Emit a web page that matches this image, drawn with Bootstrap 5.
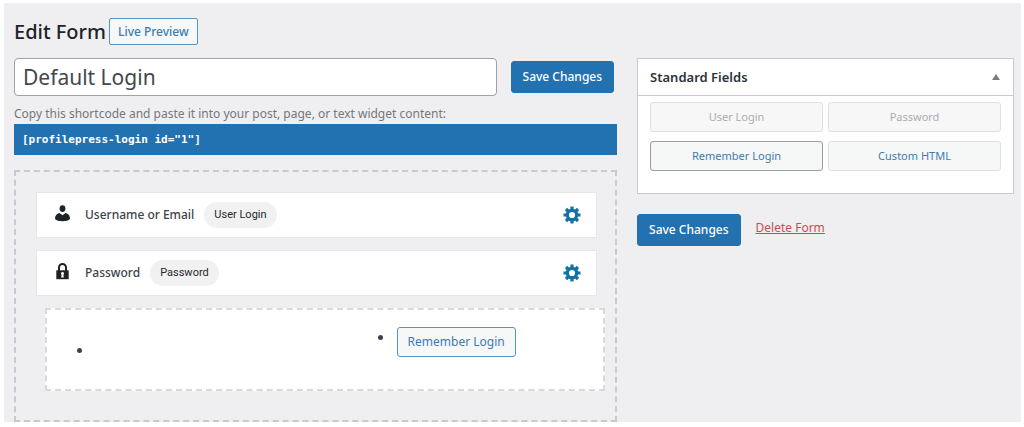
<!DOCTYPE html>
<html lang="en">
<head>
<meta charset="utf-8">
<meta name="viewport" content="width=device-width, initial-scale=1">
<title>Edit Form</title>
<link href="https://cdn.jsdelivr.net/npm/bootstrap@5.3.0/dist/css/bootstrap.min.css" rel="stylesheet">
<style>
  body { font-family: "Noto Sans", "Open Sans", sans-serif; font-size: 12px; line-height: 20px; color: #3c434a; background: #fff; }
  .admin-panel { background: #efeff2; margin: 3px 3px 5px 4px; padding: 15px 7px 0 10px; }
  .page-title { font-size: 20px; line-height: 27px; font-weight: 500; color: #1d2327; }
  .title-bar { gap: 3px; }
  .editor-grid { display: grid; grid-template-columns: minmax(0, 1.6fr) minmax(0, 1fr); column-gap: 20px; margin-top: 13px; }
  .wp-btn { font-size: 12px; line-height: 20px; padding: 4px 10px; border-radius: 3px; --bs-btn-color: #3d7cb0; --bs-btn-bg: #f6f7f7; --bs-btn-border-color: #5795c6; --bs-btn-hover-color: #0a4b78; --bs-btn-hover-bg: #f0f0f1; --bs-btn-hover-border-color: #0a4b78; }
  .preview-btn { font-weight: 500; padding: 3px 8px; line-height: 19px; border-radius: 2px; }
  .save-btn { padding: 5px 11px; font-weight: 500; --bs-btn-color: #fff; --bs-btn-bg: #2271b1; --bs-btn-border-color: #2271b1; --bs-btn-hover-color: #fff; --bs-btn-hover-bg: #135e96; }
  .name-bar { gap: 14px; padding-right: 3px; }
  .form-name { font-size: 21px; line-height: 28px; padding: 4px 8px; border: 1px solid #a0a2a6; border-radius: 4px; color: #43474b; }
  .hint { color: #74777b; line-height: 21px; margin-top: 7px; }
  .shortcode { background: #2271b1; color: #fff; font: bold 11px/31px "DejaVu Sans Mono", monospace; padding: 0 8px; }
  .builder { margin-top: 15px; padding: 20px 18px 29px 20px; border: 2px dashed #c9c9cf; }
  .field-row { background: #fff; border: 1px solid #e6e6ea; height: 46px; padding: 0 15px 0 17px; margin-bottom: 12px; font-weight: 500; }
  .field-label { margin-left: 14px; }
  .type-pill { font: 400 11px/26px Roboto, "Liberation Sans", sans-serif; background: #f1f1f2; color: #24282c; border-radius: 13px; padding: 0 10px; margin-left: 10px; }
  .drop-zone { background: #fff; border: 2px dashed #d9d9dc; margin: 0 -8px 0 9px; padding: 17px 0 32px 30px; }
  .drop-list { list-style: none; display: grid; grid-template-columns: 4fr 3fr; }
  .dot { width: 5px; height: 5px; border-radius: 50%; background: #3c434a; }
  .drop-slot { gap: 14px; }
  .metabox { background: #fff; border: 1px solid #c9cacf; }
  .metabox-head { height: 37px; padding: 0 12px; border-bottom: 1px solid #c9cacf; }
  .metabox-title { font-size: 13px; line-height: 20px; font-weight: 600; color: #2c3338; }
  .field-buttons { display: grid; grid-template-columns: 1fr 1fr; gap: 9px 5px; padding: 6px 12px 22px; }
  .field-buttons .wp-btn { font-size: 11px; --bs-btn-border-color: #dfdfe1; --bs-btn-disabled-color: #aaadb0; --bs-btn-disabled-bg: #f7f7f7; --bs-btn-disabled-border-color: #e0e0e2; --bs-btn-disabled-opacity: 1; }
  .field-buttons .picked { --bs-btn-border-color: #9a9da1; }
  .delete-link { color: #cf4a50; margin-left: 15px; }
</style>
</head>
<body>
<main class="admin-panel">
  <header class="title-bar d-flex align-items-center">
    <h1 class="page-title mb-0">Edit Form</h1>
    <button type="button" class="btn wp-btn preview-btn">Live Preview</button>
  </header>

  <div class="editor-grid">
    <section>
      <div class="name-bar d-flex align-items-center">
        <input class="form-control form-name flex-fill" type="text" value="Default Login" aria-label="Form name">
        <button type="button" class="btn wp-btn save-btn flex-shrink-0">Save Changes</button>
      </div>
      <p class="hint mb-0">Copy this shortcode and paste it into your post, page, or text widget content:</p>
      <div class="shortcode">[profilepress-login id="1"]</div>

      <div class="builder">
        <div class="field-row d-flex align-items-center">
          <svg width="17" height="20" viewBox="0 0 17 20" fill="#1d2327" aria-hidden="true"><ellipse cx="8.500" cy="3.600" rx="2.900" ry="3.400"/><path d="M1 14c0-3.300 1.500-5.300 4.500-6l3 2.200 3-2.200c3 .7 4.500 2.700 4.500 6-1.500 1.500-4 2.200-7.500 2.200S2.500 15.500 1 14z"/></svg>
          <span class="field-label">Username or Email</span>
          <span class="type-pill">User Login</span>
          <button type="button" class="btn p-0 border-0 ms-auto d-flex" aria-label="User login settings">
            <svg width="18" height="18" viewBox="-9 -9 18 18" aria-hidden="true"><g stroke="#1272a6" stroke-width="3.200"><path d="M0-8.500V8.500M-8.500 0H8.500M-6-6L6 6M6-6L-6 6"/></g><circle r="4.700" fill="#fff" stroke="#1272a6" stroke-width="3.200"/></svg>
          </button>
        </div>
        <div class="field-row d-flex align-items-center">
          <svg width="17" height="20" viewBox="0 0 17 20" aria-hidden="true"><path d="M5 8V4.500a3.500 3.500 0 0 1 7 0V8" fill="none" stroke="#1d2327" stroke-width="2"/><path d="M2.300 7.300h12.400v8.900H2.300z" fill="#1d2327"/><path d="M8.500 9a1.500 1.500 0 0 1 .9 2.700l.4 2.700H7.200l.4-2.700A1.500 1.500 0 0 1 8.500 9z" fill="#fff"/></svg>
          <span class="field-label">Password</span>
          <span class="type-pill">Password</span>
          <button type="button" class="btn p-0 border-0 ms-auto d-flex" aria-label="Password settings">
            <svg width="18" height="18" viewBox="-9 -9 18 18" aria-hidden="true"><g stroke="#1272a6" stroke-width="3.200"><path d="M0-8.500V8.500M-8.500 0H8.500M-6-6L6 6M6-6L-6 6"/></g><circle r="4.700" fill="#fff" stroke="#1272a6" stroke-width="3.200"/></svg>
          </button>
        </div>
        <div class="drop-zone">
          <ul class="drop-list ps-0 mb-0">
            <li class="d-flex align-items-center pt-3"><span class="dot"></span></li>
            <li class="drop-slot d-flex align-items-start"><span class="dot mt-2"></span><button type="button" class="btn wp-btn">Remember Login</button></li>
          </ul>
        </div>
      </div>
    </section>

    <aside>
      <div class="metabox">
        <div class="metabox-head d-flex align-items-center justify-content-between">
          <h2 class="metabox-title mb-0">Standard Fields</h2>
          <button type="button" class="btn p-0 border-0 d-flex" aria-label="Toggle panel">
            <svg width="10" height="8" viewBox="0 0 10 8" fill="#787c82" aria-hidden="true"><path d="M5 1l4 6H1z"/></svg>
          </button>
        </div>
        <div class="field-buttons">
          <button type="button" class="btn wp-btn" disabled>User Login</button>
          <button type="button" class="btn wp-btn" disabled>Password</button>
          <button type="button" class="btn wp-btn picked">Remember Login</button>
          <button type="button" class="btn wp-btn">Custom HTML</button>
        </div>
      </div>
      <div class="d-flex align-items-center mt-3 pt-1">
        <button type="button" class="btn wp-btn save-btn">Save Changes</button>
        <a href="#" class="delete-link pb-1">Delete Form</a>
      </div>
    </aside>
  </div>
</main>
<script src="https://cdn.jsdelivr.net/npm/bootstrap@5.3.0/dist/js/bootstrap.bundle.min.js"></script>
</body>
</html>
